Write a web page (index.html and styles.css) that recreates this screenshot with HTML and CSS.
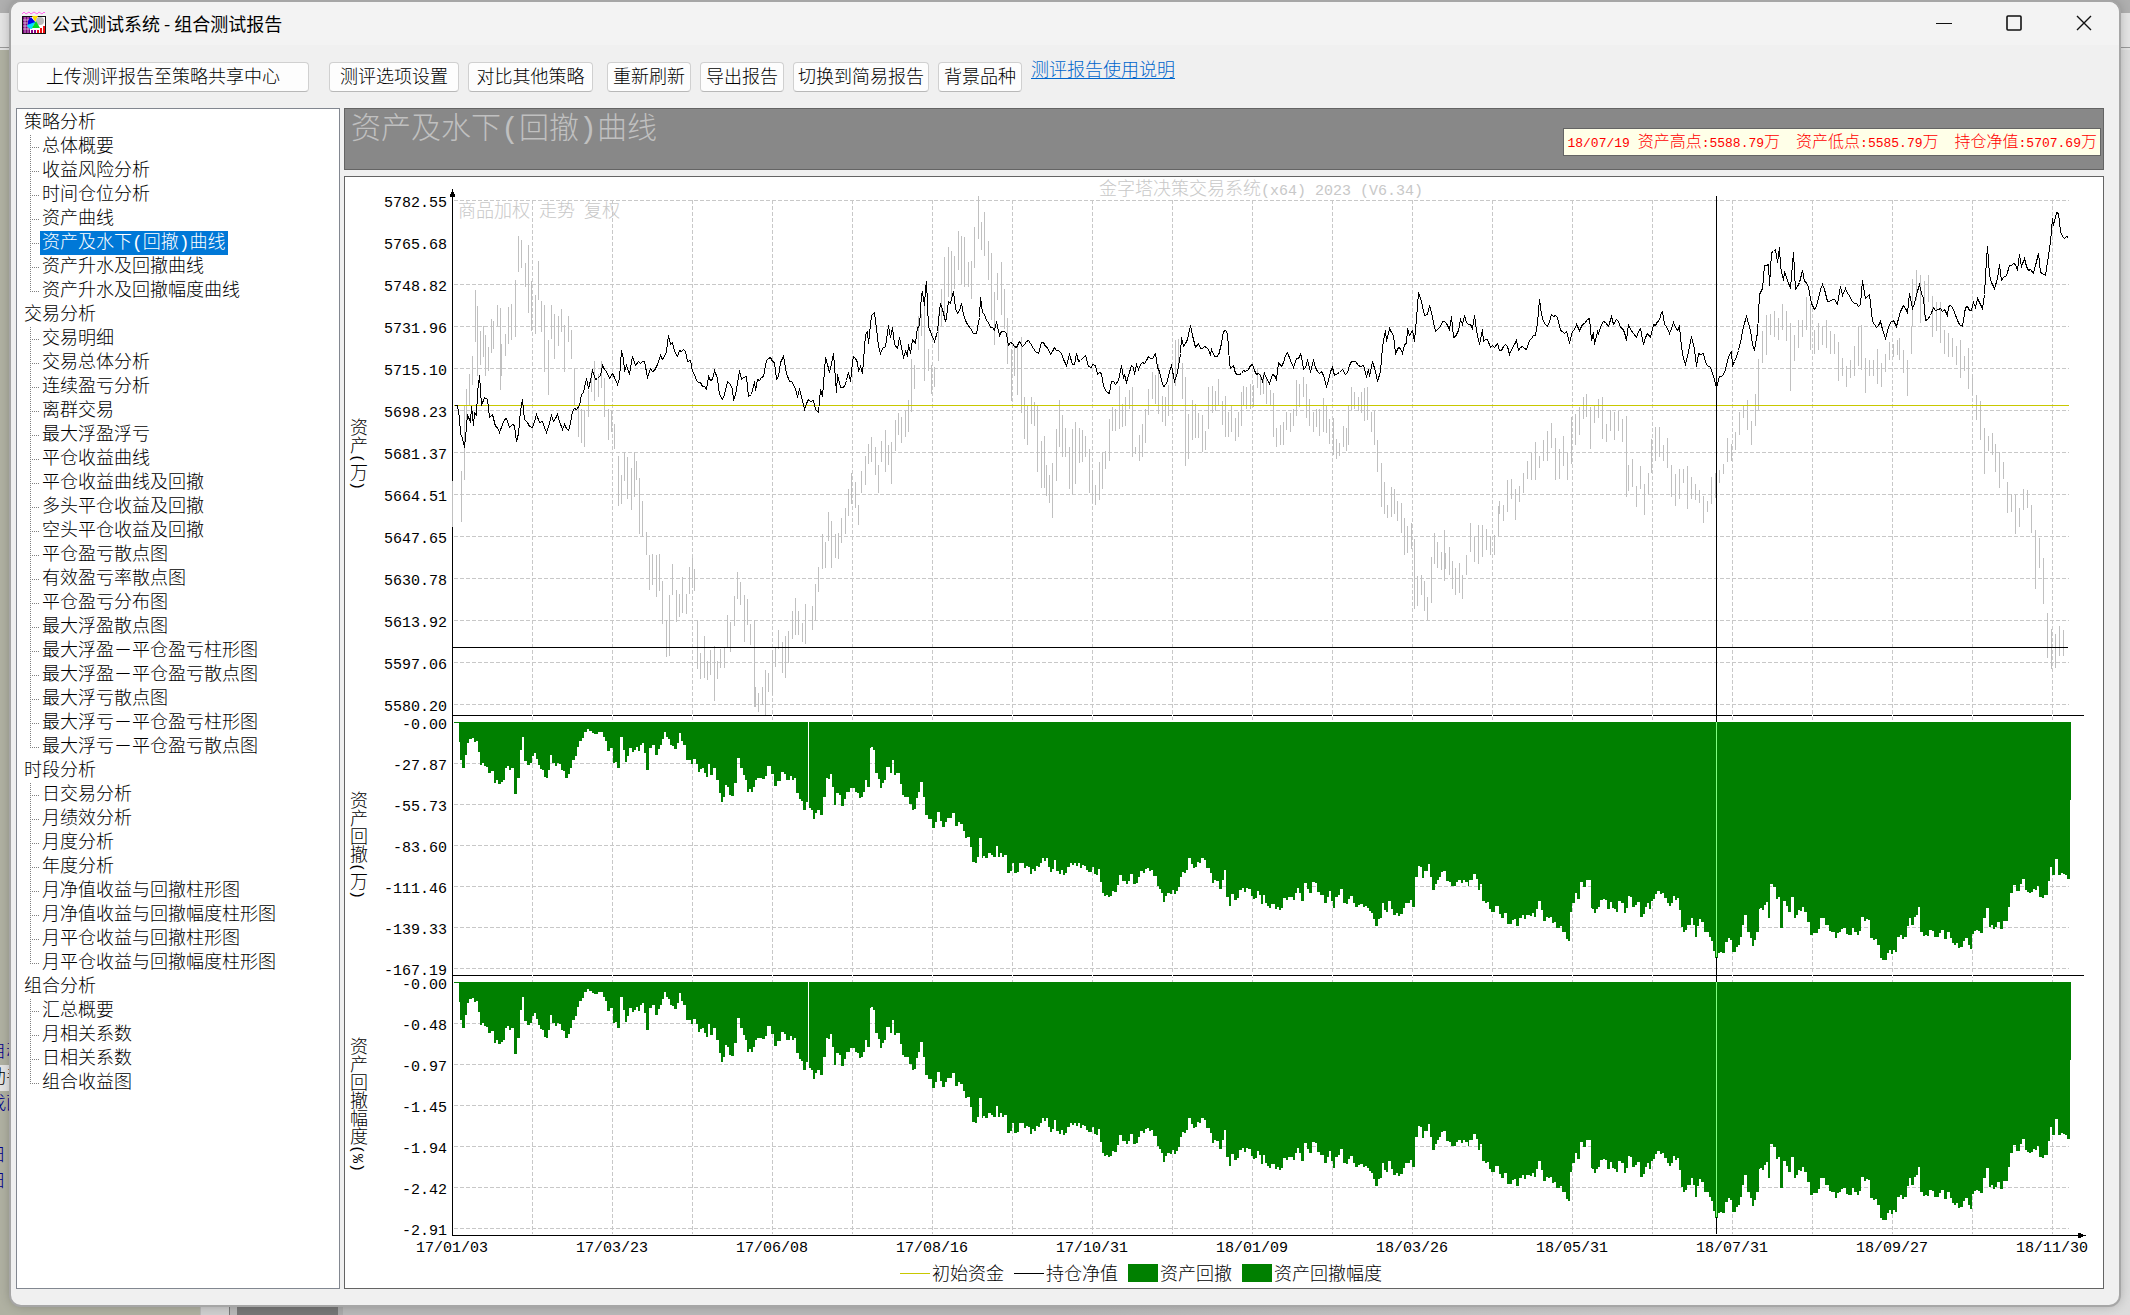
FILE: index.html
```html
<!DOCTYPE html>
<html lang="zh-CN">
<head>
    <meta charset="UTF-8">
    <meta name="viewport" content="width=device-width, initial-scale=1.0">
    <title>公式测试系统 - 组合测试报告</title>
    <link rel="stylesheet" href="styles.css">
</head>
<body>
    <div class="behind" aria-hidden="true">
        <div class="behind-corner"></div>
        <div class="behind-text">
            <span>自动</span>
            <span class="lit">助手</span>
            <span>找面</span>
            <span class="gap">日</span>
            <span>日</span>
        </div>
        <div class="behind-foot"><i></i><b></b></div>
    </div>

    <div class="window">
        <header class="titlebar">
            <svg class="app-icon" viewBox="0 0 24 23">
                <path d="M0 3l2-2 2 2 3-2 2 2 3-2 3 2 2-2 3 2 2-2 1 1" fill="none" stroke="#f6e"/>
                <rect x="0" y="5" width="24" height="18" fill="#111"/>
                <rect x="1" y="6" width="22" height="16" fill="#fff"/>
                <path d="M1 6h7v16H1z" fill="#707"/>
                <path d="M1 9h7M1 12h6M1 15h6M1 18h7M3 6v16M6 6v16" stroke="#fff" stroke-width=".6"/>
                <path d="M10 5h6l-3 6z" fill="#fd0"/>
                <circle cx="18" cy="10" r="4" fill="#bbb"/>
                <path d="M9 6l5 6-8 2q-1-5 3-8z" fill="#00e"/>
                <path d="M5 14l8-3-3 7q-4 0-5-4z" fill="#0df"/>
                <path d="M14 10l4 7h-8z" fill="#0d2"/>
                <path d="M10 22v-3M13 22v-3" stroke="#808" stroke-width="2"/>
                <path d="M16 22v-3M19 22v-5M22 22v-7" stroke="#e11" stroke-width="2"/>
            </svg>
            <h1>公式测试系统 - 组合测试报告</h1>
            <div class="controls">
                <button aria-label="最小化"><svg viewBox="0 0 16 16"><path d="M0 8.5h16"/></svg></button>
                <button aria-label="最大化"><svg viewBox="0 0 16 16"><rect x="1" y="1" width="14" height="14" rx="1" stroke-width="1.6"/></svg></button>
                <button aria-label="关闭"><svg viewBox="0 0 16 16"><path d="M1 1l14 14M15 1L1 15" stroke-width="1.4"/></svg></button>
            </div>
        </header>

        <nav class="toolbar">
            <button class="upload">上传测评报告至策略共享中心</button>
            <button class="wide">测评选项设置</button>
            <button class="compare">对比其他策略</button>
            <button>重新刷新</button>
            <button>导出报告</button>
            <button>切换到简易报告</button>
            <button>背景品种</button>
            <a href="#">测评报告使用说明</a>
        </nav>

        <main class="content">
            <ul class="tree">
                <li><a href="#">策略分析</a>
                    <ul>
                        <li><a href="#">总体概要</a></li>
                        <li><a href="#">收益风险分析</a></li>
                        <li><a href="#">时间仓位分析</a></li>
                        <li><a href="#">资产曲线</a></li>
                        <li><a href="#" class="selected">资产及水下(回撤)曲线</a></li>
                        <li><a href="#">资产升水及回撤曲线</a></li>
                        <li><a href="#">资产升水及回撤幅度曲线</a></li>
                    </ul>
                </li>
                <li><a href="#">交易分析</a>
                    <ul>
                        <li><a href="#">交易明细</a></li>
                        <li><a href="#">交易总体分析</a></li>
                        <li><a href="#">连续盈亏分析</a></li>
                        <li><a href="#">离群交易</a></li>
                        <li><a href="#">最大浮盈浮亏</a></li>
                        <li><a href="#">平仓收益曲线</a></li>
                        <li><a href="#">平仓收益曲线及回撤</a></li>
                        <li><a href="#">多头平仓收益及回撤</a></li>
                        <li><a href="#">空头平仓收益及回撤</a></li>
                        <li><a href="#">平仓盈亏散点图</a></li>
                        <li><a href="#">有效盈亏率散点图</a></li>
                        <li><a href="#">平仓盈亏分布图</a></li>
                        <li><a href="#">最大浮盈散点图</a></li>
                        <li><a href="#">最大浮盈－平仓盈亏柱形图</a></li>
                        <li><a href="#">最大浮盈－平仓盈亏散点图</a></li>
                        <li><a href="#">最大浮亏散点图</a></li>
                        <li><a href="#">最大浮亏－平仓盈亏柱形图</a></li>
                        <li><a href="#">最大浮亏－平仓盈亏散点图</a></li>
                    </ul>
                </li>
                <li><a href="#">时段分析</a>
                    <ul>
                        <li><a href="#">日交易分析</a></li>
                        <li><a href="#">月绩效分析</a></li>
                        <li><a href="#">月度分析</a></li>
                        <li><a href="#">年度分析</a></li>
                        <li><a href="#">月净值收益与回撤柱形图</a></li>
                        <li><a href="#">月净值收益与回撤幅度柱形图</a></li>
                        <li><a href="#">月平仓收益与回撤柱形图</a></li>
                        <li><a href="#">月平仓收益与回撤幅度柱形图</a></li>
                    </ul>
                </li>
                <li><a href="#">组合分析</a>
                    <ul>
                        <li><a href="#">汇总概要</a></li>
                        <li><a href="#">月相关系数</a></li>
                        <li><a href="#">日相关系数</a></li>
                        <li><a href="#">组合收益图</a></li>
                    </ul>
                </li>
            </ul>

            <section class="report">
                <div class="report-head">
                    <h2>资产及水下(回撤)曲线</h2>
                    <p class="readout">
                        <span><b>18/07/19 </b>资产高点<b>:5588.79</b>万</span>
                        <span>资产低点<b>:5585.79</b>万</span>
                        <span>持仓净值<b>:5707.69</b>万</span>
                    </p>
                </div>
                <div class="chart-panel">
                    <svg id="chart" class="chart" viewBox="345 177 1758 1111">
                        <g id="grid" class="grid"></g>
                        <path id="background" class="background-bars"/>
                        <g class="drawdown">
                            <path id="drawdown"/>
                            <use href="#drawdown" y="260"/>
                            <path class="notch" d="M808.5 722V804M808.5 982V1064"/>
                        </g>
                        <g class="axis">
                            <path d="M452.5 192V1235.5H2084M453 715.5H2084M453 975.5H2084"/>
                            <path class="axis-gap" d="M452.5 481V527"/>
                            <path class="arrow" d="M452.5 189l-3 8h6zM2086 1235.5l-8-3v6z"/>
                        </g>
                        <g id="ticks" class="ticks"></g>
                        <path class="capital" d="M454 405.5H2069"/>
                        <polyline id="equity" class="equity"/>
                        <path class="cross" d="M453 647.5H2068M1716.5 196V1234"/>
                        <path class="cross-lit" d="M1716.5 722V957M1716.5 982V1217"/>
                        <g id="labels" class="labels"></g>
                        <g class="vertical">
                            <text x="356" y="418">资产<tspan>(</tspan>万<tspan>)</tspan></text>
                            <text x="356" y="791">资产回撤<tspan>(</tspan>万<tspan>)</tspan></text>
                            <text x="356" y="1037">资产回撤幅度<tspan>(%)</tspan></text>
                        </g>
                        <g class="watermark">
                            <text x="1099" y="195">金字塔决策交易系统<tspan>(x64) 2023 (V6.34)</tspan></text>
                            <text x="458" y="217">商品加权<tspan> </tspan>走势<tspan> </tspan>复权</text>
                        </g>
                        <g class="legend">
                            <path class="capital" d="M900 1273.5h30"/>
                            <text x="932" y="1280">初始资金</text>
                            <path class="equity" d="M1014 1273.5h30"/>
                            <text x="1046" y="1280">持仓净值</text>
                            <rect x="1128" y="1264" width="30" height="18"/>
                            <text x="1160" y="1280">资产回撤</text>
                            <rect x="1242" y="1264" width="30" height="18"/>
                            <text x="1274" y="1280">资产回撤幅度</text>
                        </g>
                    </svg>
                </div>
            </section>
        </main>
    </div>

    <script src="chart.js"></script>
</body>
</html>
```

FILE: styles.css
```css
* {
    box-sizing: border-box;
}

body {
    margin: 0;
    padding: 2px 11px 10px;
    min-height: 100vh;
    display: flex;
    background: #dcdcdc;
    color: #000;
    font-family: "Liberation Mono", "Noto Sans CJK SC", monospace;
    font-size: 18px;
    font-weight: 300;
    line-height: 24px;
}

h1, h2, p, ul {
    margin: 0;
    padding: 0;
    font-weight: 300;
}

/* what shows round the window */
.behind {
    position: absolute;
    inset: 0;
    overflow: hidden;
    background: linear-gradient(to right, #b0b1a2 0, #b0b1a2 200px, #b9b9b9 200px, #b9b9b9 50%, #dcdcdc 100%);
}

.behind-corner {
    height: 50px;
    background: linear-gradient(to bottom, #afafaf 13px, #e4e4e4 13px, #e4e4e4 47px, #999 47px, #999 48px, #e4e4e4 48px);
}

.behind-text {
    position: absolute;
    top: 1039px;
    left: -12px;
    width: 40px;
    display: flex;
    flex-direction: column;
    color: #00008b;
    line-height: 26px;
    white-space: nowrap;
}

.behind-text .lit {
    background: #e4e4e4;
    color: #000;
}

.behind-text .gap {
    margin-top: 26px;
}

.behind-foot {
    position: absolute;
    bottom: 0;
    left: 201px;
    height: 14px;
    width: 142px;
    display: flex;
    justify-content: space-between;
}

.behind-foot i {
    width: 29px;
    background: #cfcfcf;
    border-right: 1px solid #777;
}

.behind-foot b {
    width: 106px;
    background: #777;
    border-right: 5px solid #aaa;
}

.window {
    position: relative;
    flex: 1;
    display: flex;
    flex-direction: column;
    background: #f0f0f0;
    border-radius: 10px;
    overflow: hidden;
    box-shadow: 0 0 0 2px #a6a6a6, 0 0 12px rgba(0, 0, 0, 0.3);
}

.titlebar {
    display: flex;
    align-items: center;
    height: 43px;
    padding: 0 0 2px 11px;
    background: #f3f3f3;
}

.app-icon {
    width: 24px;
    height: 23px;
}

.titlebar h1 {
    margin-left: 6px;
    font-family: "Noto Sans CJK SC", sans-serif;
    font-size: 18px;
    font-weight: 400;
}

.controls {
    display: flex;
    align-self: stretch;
    margin-left: auto;
}

.controls button {
    width: 70px;
    padding: 0;
    border: none;
    background: none;
}

.controls svg {
    width: 16px;
    height: 16px;
    vertical-align: middle;
    fill: none;
    stroke: #111;
}

.toolbar {
    display: flex;
    gap: 9px;
    padding: 17px 6px 16px;
}

.toolbar button {
    min-width: 84px;
    height: 30px;
    padding: 2px 4px 0;
    border: 1px solid #d0d0d0;
    border-bottom-color: #b8b8b8;
    border-radius: 4px;
    background: #fdfdfd;
    color: #000;
    font: inherit;
    line-height: 24px;
}

.toolbar .upload {
    width: 292px;
    margin-right: 11px;
}

.toolbar .wide {
    width: 130px;
}

.toolbar .compare {
    width: 125px;
    margin-right: 5px;
}

.toolbar a {
    align-self: flex-start;
    color: #0066cc;
    line-height: 18px;
    text-underline-offset: 2px;
}

.content {
    flex: 1;
    display: grid;
    grid-template-columns: 324px 1fr;
    gap: 4px;
    padding: 0 15px 16px 5px;
}

.tree {
    padding: 2px 5px;
    border: 1px solid #828790;
    background: #fff;
    list-style: none;
}

.tree ul {
    margin-left: 8px;
    list-style: none;
}

/* dotted branch lines */
.tree ul li {
    padding-left: 10px;
    background:
        repeating-linear-gradient(to bottom, #808080 0 1px, transparent 1px 2px) 0 0 / 1px 100% no-repeat,
        repeating-linear-gradient(to right, #808080 0 1px, transparent 1px 2px) 0 12px / 9px 1px no-repeat;
}

.tree ul li:last-child {
    background-size: 1px 12px, 9px 1px;
}

.tree a {
    display: block;
    width: max-content;
    height: 24px;
    padding: 0 2px;
    color: #000;
    text-decoration: none;
}

.tree .selected {
    background: #0078d7;
    color: #fff;
}

.report {
    display: flex;
    flex-direction: column;
    gap: 6px;
    min-width: 0;
}

.report-head {
    display: flex;
    justify-content: space-between;
    align-items: flex-start;
    height: 62px;
    padding: 0 2px 0 6px;
    border: 1px solid #646464;
    background: #888;
}

.report-head h2 {
    color: #c0c0c0;
    font-size: 30px;
    line-height: 42px;
}

.readout {
    display: flex;
    gap: 16px;
    margin-top: 19px;
    padding: 0 3px;
    border: 1px solid #646464;
    background: #ffffe8;
    color: #f00;
    font-family: "Noto Sans CJK SC", sans-serif;
    font-size: 16px;
    line-height: 22px;
    white-space: pre;
}

.readout b {
    font-family: "Liberation Mono", monospace;
    font-size: 13px;
    font-weight: 400;
}

.chart-panel {
    flex: 1;
    border: 1px solid #646464;
    background: #fff;
}

.chart {
    display: block;
    width: 100%;
    height: auto;
    fill: none;
    shape-rendering: crispEdges;
}

.chart text {
    fill: #000;
}

.chart tspan {
    font-size: 15px;
    white-space: pre;
}

.grid {
    stroke: #c8c8c8;
    stroke-dasharray: 4 2;
}

.ticks {
    stroke: #fff;
}

.background-bars {
    stroke: #c0c0c0;
}

.drawdown,
.legend rect {
    fill: #008000;
}

.notch {
    stroke: #fff;
}

.axis {
    stroke: #000;
}

.axis-gap {
    stroke: #c0c0c0;
}

.arrow {
    fill: #000;
    stroke: none;
}

.capital {
    stroke: #c8c800;
}

.equity {
    stroke: #000;
}

.cross {
    stroke: #000;
}

.cross-lit {
    stroke: #80ff80;
}

.labels {
    font-size: 15px;
}

.labels .value {
    text-anchor: end;
}

.labels .date {
    text-anchor: middle;
}

.vertical {
    writing-mode: vertical-rl;
}

.chart .watermark text {
    fill: #c8c8c8;
}
```

FILE: chart.js
```js
// net value curve, x,y
const equity = `454,405 457,405 459,417 460,433 464,447 465,437 467,414 470,422 471,406 473,425 474,412 476,415 477,392 479,375
481,405 484,397 487,399 489,417 492,414 495,426 499,432 502,424 506,418 509,427 512,424 514,425 516,441 518,433 520,410 522,399
524,419 527,422 529,426 532,427 536,414 539,422 542,421 546,432 551,415 553,421 557,414 562,429 564,424 568,430 572,411 576,409
579,405 581,394 583,392 586,378 588,388 592,370 595,379 600,375 602,365 609,378 612,373 617,384 619,378 621,350 623,358 624,371
626,365 629,374 632,356 635,365 638,361 644,361 647,377 650,368 652,371 657,364 660,355 662,359 666,351 668,335 670,344 672,342
674,351 677,356 679,350 685,351 687,361 690,360 692,371 698,382 706,389 708,376 712,379 714,370 717,378 719,394 722,399 727,381
732,388 733,400 735,394 739,370 741,379 746,376 748,396 751,394 754,381 755,390 757,379 763,376 766,360 768,358 774,362 776,379
778,376 780,362 783,356 786,373 789,381 793,384 797,396 799,389 801,396 804,409 808,399 810,401 813,400 815,409 818,412 820,389
822,396 825,357 829,372 833,353 836,392 837,374 840,387 844,386 848,372 850,381 852,362 853,356 857,362 858,371 860,366 862,373
865,334 867,331 868,343 871,315 874,312 878,346 880,353 885,346 888,325 890,337 892,327 894,344 897,348 899,337 903,357 905,351
907,355 908,344 910,353 912,339 915,343 917,327 919,326 921,294 922,292 924,305 925,289 926,281 928,326 931,334 934,341 937,331
939,310 940,303 945,321 946,317 948,301 950,303 953,291 955,308 957,313 959,310 961,303 963,314 967,324 970,328 973,333 976,333
979,317 980,297 982,312 988,322 994,330 996,321 999,335 1004,331 1006,333 1008,345 1010,342 1012,343 1016,347 1019,341 1022,346
1024,344 1028,340 1033,348 1038,353 1041,342 1047,347 1050,354 1054,347 1061,353 1066,365 1069,354 1072,364 1074,364 1076,353
1078,361 1082,358 1085,355 1088,366 1091,367 1092,364 1095,365 1097,374 1101,373 1103,385 1107,392 1109,393 1111,381 1115,384
1118,380 1121,365 1123,378 1124,374 1126,382 1131,365 1133,367 1134,374 1136,364 1138,369 1140,364 1146,360 1148,356 1152,358
1155,353 1157,367 1159,371 1163,386 1167,380 1171,365 1174,381 1177,372 1180,353 1181,337 1183,346 1187,339 1190,325 1192,335
1195,347 1198,343 1202,348 1206,347 1208,349 1210,355 1211,349 1214,356 1218,355 1221,343 1223,331 1227,333 1229,362 1230,368
1233,365 1235,373 1239,374 1243,370 1248,369 1252,364 1254,370 1258,373 1262,381 1264,373 1269,383 1272,374 1276,379 1278,362
1281,366 1287,352 1290,360 1293,367 1296,358 1300,354 1301,356 1303,369 1307,360 1310,371 1313,360 1317,371 1321,371 1326,386
1332,367 1334,375 1337,373 1342,369 1345,374 1349,365 1353,361 1358,365 1363,365 1366,376 1368,369 1369,376 1372,361 1375,371
1377,381 1380,371 1382,346 1385,330 1386,341 1389,328 1393,335 1395,353 1398,347 1402,353 1404,344 1406,343 1407,328 1409,335
1412,330 1414,341 1417,306 1418,292 1421,301 1424,315 1427,314 1429,305 1431,312 1435,331 1438,328 1444,321 1449,329 1451,316
1453,337 1458,330 1460,319 1462,324 1464,315 1468,324 1472,328 1474,315 1476,330 1479,344 1482,329 1483,341 1487,339 1490,347
1497,343 1499,350 1503,346 1507,346 1509,354 1512,347 1516,340 1518,350 1522,346 1526,349 1529,340 1535,335 1537,322 1539,299
1541,314 1545,324 1547,326 1551,314 1557,317 1560,330 1562,331 1566,331 1569,342 1572,331 1576,324 1579,330 1582,324 1587,319
1589,318 1591,340 1593,332 1594,344 1597,331 1598,333 1601,324 1605,322 1608,326 1611,316 1613,324 1616,319 1622,328 1626,340
1628,324 1633,333 1636,337 1640,328 1643,344 1647,333 1650,337 1653,324 1659,320 1661,312 1662,311 1664,324 1669,333 1673,322
1677,330 1679,326 1681,347 1685,364 1688,351 1691,336 1694,349 1696,366 1698,353 1703,353 1705,362 1710,367 1713,376 1716,387
1719,376 1723,374 1727,360 1731,351 1732,365 1736,356 1740,342 1743,326 1746,316 1750,330 1752,344 1754,350 1756,337 1757,333
1759,294 1762,288 1764,265 1768,264 1769,285 1771,252 1775,249 1777,262 1779,247 1780,266 1783,280 1784,271 1787,280 1790,288
1793,252 1795,289 1799,282 1802,270 1804,281 1808,287 1811,303 1814,309 1818,298 1822,284 1827,301 1832,299 1837,304 1840,286
1842,295 1845,288 1849,295 1854,303 1860,304 1862,280 1865,298 1869,294 1872,321 1876,327 1880,321 1885,338 1888,327 1893,320
1896,326 1900,311 1903,305 1907,312 1909,293 1912,308 1919,284 1923,298 1925,320 1930,315 1933,307 1938,309 1944,309 1947,315
1948,306 1952,307 1957,320 1962,326 1965,307 1971,310 1973,302 1975,307 1977,298 1982,308 1984,294 1985,275 1987,246 1989,275
1994,288 1997,278 1999,264 2001,280 2006,275 2009,265 2015,264 2017,270 2019,254 2021,266 2024,258 2028,270 2033,273 2038,253
2040,272 2045,275 2048,255 2050,241 2052,218 2053,225 2056,212 2058,213 2060,231 2062,236 2068,237`;

// background instrument, x,high,low
const bars = `461,471,522 464,405,480 466,389,422 469,374,406 472,356,385 475,290,342 477,306,376 480,331,365 483,326,357 485,335,376
488,347,371 491,319,353 493,321,349 497,305,326 500,308,390 501,344,376 505,334,356 508,307,344 511,304,340 515,280,337 518,236,272
521,240,268 525,263,287 528,245,313 531,281,331 535,295,334 538,261,300 541,301,332 544,305,372 548,340,395 551,305,339 554,314,359
558,316,346 561,309,332 564,325,372 568,316,342 571,330,359 574,368,405 578,405,437 581,409,443 584,410,447 588,390,417 591,371,392
594,361,401 598,374,397 601,361,388 604,378,417 608,409,440 611,411,432 614,424,449 618,456,506 621,475,504 624,452,481 627,457,499
631,468,510 634,452,497 636,461,480 639,478,534 642,501,537 646,532,555 649,555,590 652,554,585 656,555,597 659,554,591 662,581,624
666,620,657 669,595,656 672,564,595 676,590,622 679,594,617 682,577,613 686,594,614 689,567,594 692,558,588 694,569,591 697,620,669
700,653,679 704,636,678 707,661,680 710,650,675 714,646,701 717,661,679 720,649,668 724,647,668 727,615,647 730,622,652 734,596,626
737,572,599 740,582,605 744,595,642 747,599,625 750,624,645 754,620,707 755,687,707 758,693,712 762,687,705 765,670,715 768,673,692
772,650,695 775,647,667 778,630,649 782,642,673 785,636,678 788,631,663 792,611,639 795,598,635 798,611,635 802,623,642 805,604,644
812,606,630 815,584,621 818,567,592 822,534,569 825,542,568 828,512,541 831,521,568 835,534,558 838,533,559 841,518,543 845,508,534
848,489,516 851,473,504 855,482,508 858,505,525 861,471,493 865,456,485 868,444,464 871,437,462 875,447,475 878,465,493 881,441,462
885,430,472 888,445,465 891,442,484 895,420,451 898,413,435 901,417,443 905,411,437 908,400,432 911,359,412 914,365,389 918,316,350
921,314,336 924,303,381 928,349,371 931,365,394 934,367,387 938,314,361 941,289,326 944,257,319 948,247,297 951,251,301 954,256,289
958,231,270 961,236,284 964,237,287 968,262,287 971,261,299 974,227,268 978,196,239 981,222,250 984,212,256 988,241,280 991,253,320
994,292,345 997,273,300 1001,262,315 1004,289,329 1007,318,364 1011,349,401 1014,345,376 1017,347,395 1021,337,413 1024,397,439
1027,405,445 1031,397,424 1034,402,426 1037,405,472 1041,441,488 1044,436,488 1046,465,496 1049,475,503 1052,463,518 1056,429,481
1059,400,447 1062,415,457 1065,428,457 1069,447,489 1072,429,495 1075,422,484 1079,428,463 1082,430,462 1085,436,457 1089,449,493
1092,470,503 1095,485,505 1099,462,500 1102,452,489 1105,451,469 1109,419,461 1112,407,431 1115,409,431 1119,386,429 1122,404,427
1125,397,426 1129,390,409 1132,387,457 1135,447,454 1139,435,461 1142,424,457 1145,409,443 1148,389,415 1152,372,399 1155,375,404
1158,364,414 1162,396,422 1165,397,426 1168,385,416 1172,373,412 1175,340,386 1178,339,369 1182,363,399 1185,377,466 1188,414,459
1192,400,440 1195,404,438 1198,413,438 1202,415,452 1205,431,450 1208,387,429 1212,386,413 1215,391,411 1218,379,406 1222,401,425
1225,396,437 1228,412,437 1231,406,432 1235,418,441 1238,412,437 1241,392,426 1243,386,406 1246,387,409 1250,384,409 1253,385,407
1257,368,388 1260,374,395 1263,373,394 1266,379,404 1270,390,406 1273,393,437 1276,428,447 1280,425,445 1283,422,445 1286,412,430
1290,413,432 1293,409,426 1296,380,416 1299,384,407 1303,377,397 1306,384,418 1309,399,426 1313,412,432 1316,409,427 1319,409,436
1323,398,432 1326,406,433 1329,419,444 1333,418,455 1336,439,459 1339,443,456 1343,426,447 1346,428,451 1348,405,445 1351,387,410
1354,392,409 1358,397,411 1361,392,413 1364,388,421 1367,387,420 1371,412,432 1374,411,445 1377,440,472 1381,463,507 1384,482,514
1387,505,518 1391,487,517 1394,489,514 1397,501,521 1401,503,533 1404,518,555 1407,526,553 1411,523,549 1414,539,609 1417,576,606
1421,575,595 1424,581,611 1427,597,620 1431,557,603 1434,533,564 1437,542,568 1441,552,570 1444,530,581 1445,553,569 1449,547,575
1452,561,589 1455,568,595 1459,563,593 1462,575,599 1466,555,575 1470,523,552 1474,537,562 1478,525,564 1482,525,557 1486,529,550
1490,536,555 1494,535,555 1498,506,537 1499,501,514 1503,505,521 1507,480,512 1511,479,499 1515,489,520 1519,486,502 1523,473,493
1527,461,479 1531,453,480 1535,442,480 1539,456,468 1543,440,461 1547,431,461 1551,423,448 1555,438,480 1559,449,479 1563,436,466
1567,453,480 1571,417,464 1575,414,445 1579,407,435 1583,397,419 1586,394,417 1590,407,449 1594,405,423 1598,399,418 1602,397,439
1606,424,442 1610,410,431 1614,412,440 1618,411,431 1622,419,442 1626,416,497 1628,465,491 1632,459,487 1636,486,507 1640,466,489
1644,484,515 1648,473,495 1651,439,473 1655,427,461 1659,427,457 1663,445,461 1667,438,468 1671,465,497 1675,474,506 1679,469,499
1683,469,483 1687,466,509 1691,477,499 1695,484,500 1699,490,503 1703,496,523 1707,501,512 1711,477,504 1715,473,498 1719,470,483
1723,464,474 1727,438,462 1731,444,461 1735,432,450 1739,412,435 1743,405,418 1747,400,430 1751,421,445 1755,394,426 1758,359,410
1762,331,363 1766,315,355 1770,314,335 1774,311,337 1778,318,340 1782,304,330 1786,311,341 1790,323,391 1794,335,361 1798,320,348
1802,320,337 1806,297,330 1810,304,350 1814,330,354 1818,323,350 1822,326,345 1826,320,348 1830,331,354 1834,334,354 1838,342,381
1842,358,376 1846,366,387 1850,360,378 1854,346,376 1858,326,366 1861,325,370 1865,358,393 1869,360,376 1873,360,376 1877,349,384
1881,363,387 1885,354,372 1889,342,360 1893,344,357 1897,340,355 1899,338,360 1903,350,373 1907,360,396 1911,326,354 1912,279,326
1916,270,300 1920,275,323 1924,281,317 1928,275,302 1932,296,337 1936,302,331 1940,302,343 1944,330,354 1948,333,357 1952,338,357
1956,346,365 1960,340,378 1964,356,371 1968,348,389 1972,374,395 1976,395,420 1980,401,440 1984,428,474 1988,436,451 1992,433,455
1995,444,472 1999,452,488 2003,462,479 2007,482,513 2011,494,512 2015,495,534 2019,508,527 2023,489,510 2027,490,508 2031,505,533
2035,530,589 2039,538,568 2043,558,604 2047,613,658 2051,629,669 2055,634,668 2059,626,656 2063,630,656`;

// drawdown, x,depth
const drawdown = `454,1 458,1 459,20 461,38 464,46 466,33 468,21 471,17 477,19 479,30 481,43 485,44 490,51 493,49 495,61 500,62 504,58
506,46 513,46 516,72 519,56 521,28 523,15 526,39 529,43 535,31 539,43 547,56 551,33 554,41 558,41 562,48 567,56 571,46 574,38
581,19 586,10 591,9 595,12 600,10 604,15 609,29 612,26 614,41 619,46 622,15 624,28 626,40 631,26 639,29 643,21 648,48 651,26
654,23 657,33 661,23 665,10 671,23 676,27 680,11 685,23 688,38 692,42 695,37 699,50 703,46 707,55 709,42 712,53 715,46 718,58
722,80 726,63 730,73 733,74 736,61 739,36 742,46 746,58 748,70 754,65 759,56 764,57 768,44 773,52 776,64 783,50 789,58 795,56
798,71 805,88 808,80 814,97 819,88 822,93 825,75 827,56 831,52 835,83 838,71 843,84 847,70 854,66 860,76 862,75 866,58 869,65
870,26 874,28 877,51 881,66 885,58 887,45 891,51 893,38 895,53 899,51 903,73 908,75 911,82 915,87 919,70 922,60 924,75 927,93
934,106 939,90 944,105 949,96 954,91 957,104 962,102 966,116 969,115 974,140 978,135 981,116 982,136 987,136 990,131 995,135
997,124 999,135 1006,133 1009,151 1013,141 1016,151 1021,141 1027,144 1031,152 1037,144 1047,136 1051,150 1055,138 1058,149
1062,148 1064,153 1069,145 1075,141 1085,144 1089,150 1093,145 1097,153 1099,147 1103,171 1109,175 1116,170 1121,153 1127,162
1132,152 1135,162 1142,149 1148,146 1156,154 1164,180 1169,171 1177,169 1181,155 1187,148 1190,136 1194,146 1198,140 1203,136
1209,146 1213,161 1218,159 1221,167 1225,148 1228,175 1230,184 1233,172 1236,178 1241,168 1250,167 1254,177 1258,169 1262,182
1264,173 1268,184 1272,182 1276,187 1282,186 1285,176 1290,175 1294,178 1298,166 1303,179 1306,161 1311,171 1314,160 1319,170
1326,181 1330,169 1334,186 1337,175 1342,167 1345,181 1352,174 1357,185 1362,182 1368,186 1372,191 1377,204 1381,196 1383,181
1387,190 1390,179 1395,193 1402,192 1407,181 1411,178 1414,185 1417,155 1419,144 1421,145 1423,156 1429,142 1431,155 1434,168
1438,158 1445,149 1448,159 1453,164 1460,158 1467,160 1468,164 1475,152 1479,168 1481,162 1484,179 1488,180 1492,190 1496,184
1503,196 1506,191 1509,202 1515,197 1518,204 1521,196 1529,193 1535,195 1540,179 1545,199 1549,196 1555,200 1559,206 1565,210
1569,219 1571,190 1574,181 1576,171 1579,177 1582,160 1585,165 1587,158 1590,158 1591,186 1595,191 1599,185 1602,178 1606,178
1609,187 1611,180 1617,190 1620,179 1623,181 1625,191 1629,174 1634,185 1639,180 1642,195 1648,181 1650,187 1654,177 1659,169
1666,176 1670,184 1674,174 1678,176 1682,205 1684,210 1686,208 1692,196 1696,215 1700,197 1703,200 1706,210 1710,215 1717,236
1721,230 1724,231 1727,220 1731,218 1733,230 1737,225 1741,215 1743,203 1746,193 1749,210 1753,224 1758,210 1759,187 1763,188
1767,180 1769,196 1772,162 1775,165 1777,177 1779,175 1782,206 1785,179 1790,190 1793,175 1795,196 1803,185 1806,190 1809,200
1812,213 1817,211 1822,196 1828,203 1836,216 1840,210 1845,206 1849,213 1853,206 1856,210 1860,209 1863,195 1869,198 1872,216
1879,223 1881,236 1884,238 1888,231 1896,230 1899,215 1906,215 1910,196 1913,203 1919,185 1922,210 1926,213 1931,208 1938,215
1943,208 1946,217 1949,210 1953,221 1962,225 1967,216 1971,227 1973,212 1977,208 1982,211 1985,196 1988,186 1990,205 1996,205
1999,200 2002,207 2004,199 2007,199 2009,185 2012,171 2015,163 2017,169 2024,157 2026,168 2030,171 2034,167 2038,164 2041,175
2047,173 2049,159 2051,145 2054,153 2057,137 2060,153 2064,152 2069,157 2070,78`;

const values = ['5782.55', '5765.68', '5748.82', '5731.96', '5715.10', '5698.23', '5681.37', '5664.51', '5647.65', '5630.78', '5613.92', '5597.06', '5580.20'];
const amounts = ['-0.00', '-27.87', '-55.73', '-83.60', '-111.46', '-139.33', '-167.19'];
const percents = ['-0.00', '-0.48', '-0.97', '-1.45', '-1.94', '-2.42', '-2.91'];
const dates = ['17/01/03', '17/03/23', '17/06/08', '17/08/16', '17/10/31', '18/01/09', '18/03/26', '18/05/31', '18/07/31', '18/09/27', '18/11/30'];

const rows = text => text.trim().split(/\s+/).map(p => p.split(',').map(Number));
const byId = id => document.getElementById(id);

// fills the days between two turning points with a small ripple
function ripple(points, size) {
    const out = [points[0]];
    for (let i = 1; i < points.length; i++) {
        const [x0, y0] = points[i - 1];
        const [x1, y1] = points[i];
        for (let x = x0 + 2; x < x1 - 1 && x > 458; x += 2) {
            const y = y0 + (y1 - y0) * (x - x0) / (x1 - x0);
            out.push([x, Math.round(y + ((x * 37) % 7 - 3) * size / 3)]);
        }
        out.push([x1, y1]);
    }
    return out;
}

byId('equity').setAttribute('points', ripple(rows(equity), 2).map(([x, y]) => `${x + 0.5},${y + 0.5}`).join(' '));
byId('background').setAttribute('d', rows(bars).map(([x, high, low]) => `M${x + 0.5} ${high}V${low}`).join(''));
byId('drawdown').setAttribute('d', 'M454 722' + ripple(rows(drawdown), 3).map(([x, depth]) => `V${722 + depth}H${x + 1}`).join('') + 'V722Z');

let grid = '';
let ticks = '';
let labels = '';

for (let x = 532; x <= 2052; x += 80) {
    grid += `<path d="M${x + 0.5} 200V1234"/>`;
    ticks += `<path d="M${x + 0.5} 714v3M${x + 0.5} 974v3"/>`;
}

function addScale(list, top, step) {
    list.forEach((value, i) => {
        const y = top + step * i;
        // no line under the second value or along the zero edge
        if (value !== '5765.68' && value !== '-0.00') {
            grid += `<path d="M454 ${y + 0.5}H2069"/>`;
        }
        labels += `<text class="value" x="447" y="${y + 7}">${value}</text>`;
    });
}

addScale(values, 200, 42);
addScale(amounts, 722, 41);
addScale(percents, 982, 41);

dates.forEach((date, i) => {
    labels += `<text class="date" x="${452 + 160 * i}" y="1252">${date}</text>`;
});

byId('grid').innerHTML = grid;
byId('ticks').innerHTML = ticks;
byId('labels').innerHTML = labels;
```
